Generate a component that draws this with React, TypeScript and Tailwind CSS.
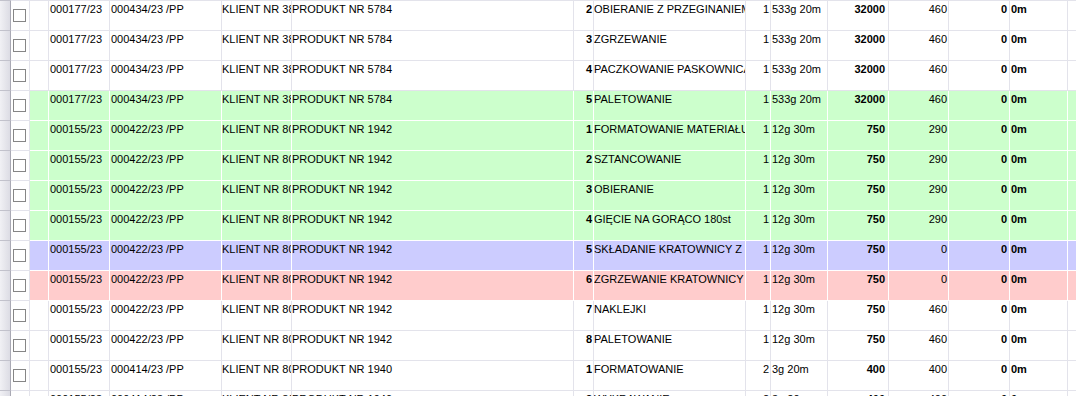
import React from 'react';
import { clsx } from 'clsx';

type Tint = 'white' | 'green' | 'blue' | 'red';

interface Row {
  zlec: string;
  nr: string;
  klient: string;
  produkt: string;
  op: number;
  opis: string;
  zm: number;
  czas: string;
  ilosc: number;
  wyk: number;
  zero: number;
  tint: Tint;
}

const ROWS: Row[] = [
  { zlec: '000177/23', nr: '000434/23 /PP', klient: 'KLIENT NR 3812', produkt: 'PRODUKT NR 5784', op: 2, opis: 'OBIERANIE Z PRZEGINANIEM', zm: 1, czas: '533g 20m', ilosc: 32000, wyk: 460, zero: 0, tint: 'white' },
  { zlec: '000177/23', nr: '000434/23 /PP', klient: 'KLIENT NR 3812', produkt: 'PRODUKT NR 5784', op: 3, opis: 'ZGRZEWANIE', zm: 1, czas: '533g 20m', ilosc: 32000, wyk: 460, zero: 0, tint: 'white' },
  { zlec: '000177/23', nr: '000434/23 /PP', klient: 'KLIENT NR 3812', produkt: 'PRODUKT NR 5784', op: 4, opis: 'PACZKOWANIE PASKOWNICA', zm: 1, czas: '533g 20m', ilosc: 32000, wyk: 460, zero: 0, tint: 'white' },
  { zlec: '000177/23', nr: '000434/23 /PP', klient: 'KLIENT NR 3812', produkt: 'PRODUKT NR 5784', op: 5, opis: 'PALETOWANIE', zm: 1, czas: '533g 20m', ilosc: 32000, wyk: 460, zero: 0, tint: 'green' },
  { zlec: '000155/23', nr: '000422/23 /PP', klient: 'KLIENT NR 8012', produkt: 'PRODUKT NR 1942', op: 1, opis: 'FORMATOWANIE MATERIAŁU', zm: 1, czas: '12g 30m', ilosc: 750, wyk: 290, zero: 0, tint: 'green' },
  { zlec: '000155/23', nr: '000422/23 /PP', klient: 'KLIENT NR 8012', produkt: 'PRODUKT NR 1942', op: 2, opis: 'SZTANCOWANIE', zm: 1, czas: '12g 30m', ilosc: 750, wyk: 290, zero: 0, tint: 'green' },
  { zlec: '000155/23', nr: '000422/23 /PP', klient: 'KLIENT NR 8012', produkt: 'PRODUKT NR 1942', op: 3, opis: 'OBIERANIE', zm: 1, czas: '12g 30m', ilosc: 750, wyk: 290, zero: 0, tint: 'green' },
  { zlec: '000155/23', nr: '000422/23 /PP', klient: 'KLIENT NR 8012', produkt: 'PRODUKT NR 1942', op: 4, opis: 'GIĘCIE NA GORĄCO 180st', zm: 1, czas: '12g 30m', ilosc: 750, wyk: 290, zero: 0, tint: 'green' },
  { zlec: '000155/23', nr: '000422/23 /PP', klient: 'KLIENT NR 8012', produkt: 'PRODUKT NR 1942', op: 5, opis: 'SKŁADANIE KRATOWNICY Z', zm: 1, czas: '12g 30m', ilosc: 750, wyk: 0, zero: 0, tint: 'blue' },
  { zlec: '000155/23', nr: '000422/23 /PP', klient: 'KLIENT NR 8012', produkt: 'PRODUKT NR 1942', op: 6, opis: 'ZGRZEWANIE KRATOWNICY', zm: 1, czas: '12g 30m', ilosc: 750, wyk: 0, zero: 0, tint: 'red' },
  { zlec: '000155/23', nr: '000422/23 /PP', klient: 'KLIENT NR 8012', produkt: 'PRODUKT NR 1942', op: 7, opis: 'NAKLEJKI', zm: 1, czas: '12g 30m', ilosc: 750, wyk: 460, zero: 0, tint: 'white' },
  { zlec: '000155/23', nr: '000422/23 /PP', klient: 'KLIENT NR 8012', produkt: 'PRODUKT NR 1942', op: 8, opis: 'PALETOWANIE', zm: 1, czas: '12g 30m', ilosc: 750, wyk: 460, zero: 0, tint: 'white' },
  { zlec: '000155/23', nr: '000414/23 /PP', klient: 'KLIENT NR 8012', produkt: 'PRODUKT NR 1940', op: 1, opis: 'FORMATOWANIE', zm: 2, czas: '3g 20m', ilosc: 400, wyk: 400, zero: 0, tint: 'white' },
  { zlec: '000155/23', nr: '000414/23 /PP', klient: 'KLIENT NR 8012', produkt: 'PRODUKT NR 1940', op: 2, opis: 'WYKRAWANIE', zm: 2, czas: '3g 20m', ilosc: 400, wyk: 400, zero: 0, tint: 'white' },
];

const TINT_BG: Record<Tint, string> = {
  white: 'bg-white border-[#e3e3eb]',
  green: 'bg-[#ccffcc] border-white',
  blue: 'bg-[#ccccff] border-white',
  red: 'bg-[#ffcccc] border-white',
};

function GridRow({ row }: { row: Row }) {
  const tint = TINT_BG[row.tint];
  const cell = clsx('h-full shrink-0 overflow-hidden whitespace-nowrap border-r pt-[2px]', tint);
  return (
    <div className="flex h-[30px]">
      {/* row indicator */}
      <div className="h-full w-[11px] shrink-0 border-r border-b border-r-[#a9a9b4] border-b-[#c2c2cc] bg-gradient-to-r from-[#f1f1f5] to-[#dcdce4]" />
      {/* checkbox */}
      <div className="h-full w-[19px] shrink-0 border-r border-b border-[#e3e3eb] bg-white pt-[8px] pl-[2px]">
        <div className="h-[13px] w-[13px] border border-[#868686] bg-white" />
      </div>
      <div className={clsx('flex h-full flex-1 border-b', tint)}>
        <div className={clsx(cell, 'w-[19px]')} />
        <div className={clsx(cell, 'w-[61px] pl-px')}>{row.zlec}</div>
        <div className={clsx(cell, 'w-[112px] pl-px')}>{row.nr}</div>
        <div className={clsx(cell, 'w-[70px]')}>{row.klient}</div>
        <div className={clsx(cell, 'w-[282px]')}>{row.produkt}</div>
        <div className={clsx(cell, 'w-[20px] pr-px text-right font-bold')}>{row.op}</div>
        <div className={clsx(cell, 'w-[152px]')}>{row.opis}</div>
        <div className={clsx(cell, 'w-[25px] pr-px text-right')}>{row.zm}</div>
        <div className={clsx(cell, 'w-[57px] pl-px')}>{row.czas}</div>
        <div className={clsx(cell, 'w-[61px] pr-[3px] text-right font-bold')}>{row.ilosc}</div>
        <div className={clsx(cell, 'w-[60px] pr-px text-right')}>{row.wyk}</div>
        <div className={clsx(cell, 'w-[61px] pr-[2px] text-right font-bold')}>{row.zero}</div>
        <div className={clsx(cell, 'w-[58px] pl-px font-bold')}>0m</div>
        <div className="h-full flex-1" />
      </div>
    </div>
  );
}

export default function App() {
  return (
    <div
      className="h-[396px] w-[1076px] overflow-hidden bg-white text-[11px] leading-[13px] text-black"
      style={{ fontFamily: '"Liberation Sans", Arial, sans-serif' }}
    >
      <div className="flex h-px">
        <div className="w-[11px] bg-[#c2c2cc]" />
        <div className="flex-1 bg-[#e3e3eb]" />
      </div>
      {ROWS.map((r, i) => (
        <GridRow key={i} row={r} />
      ))}
    </div>
  );
}
